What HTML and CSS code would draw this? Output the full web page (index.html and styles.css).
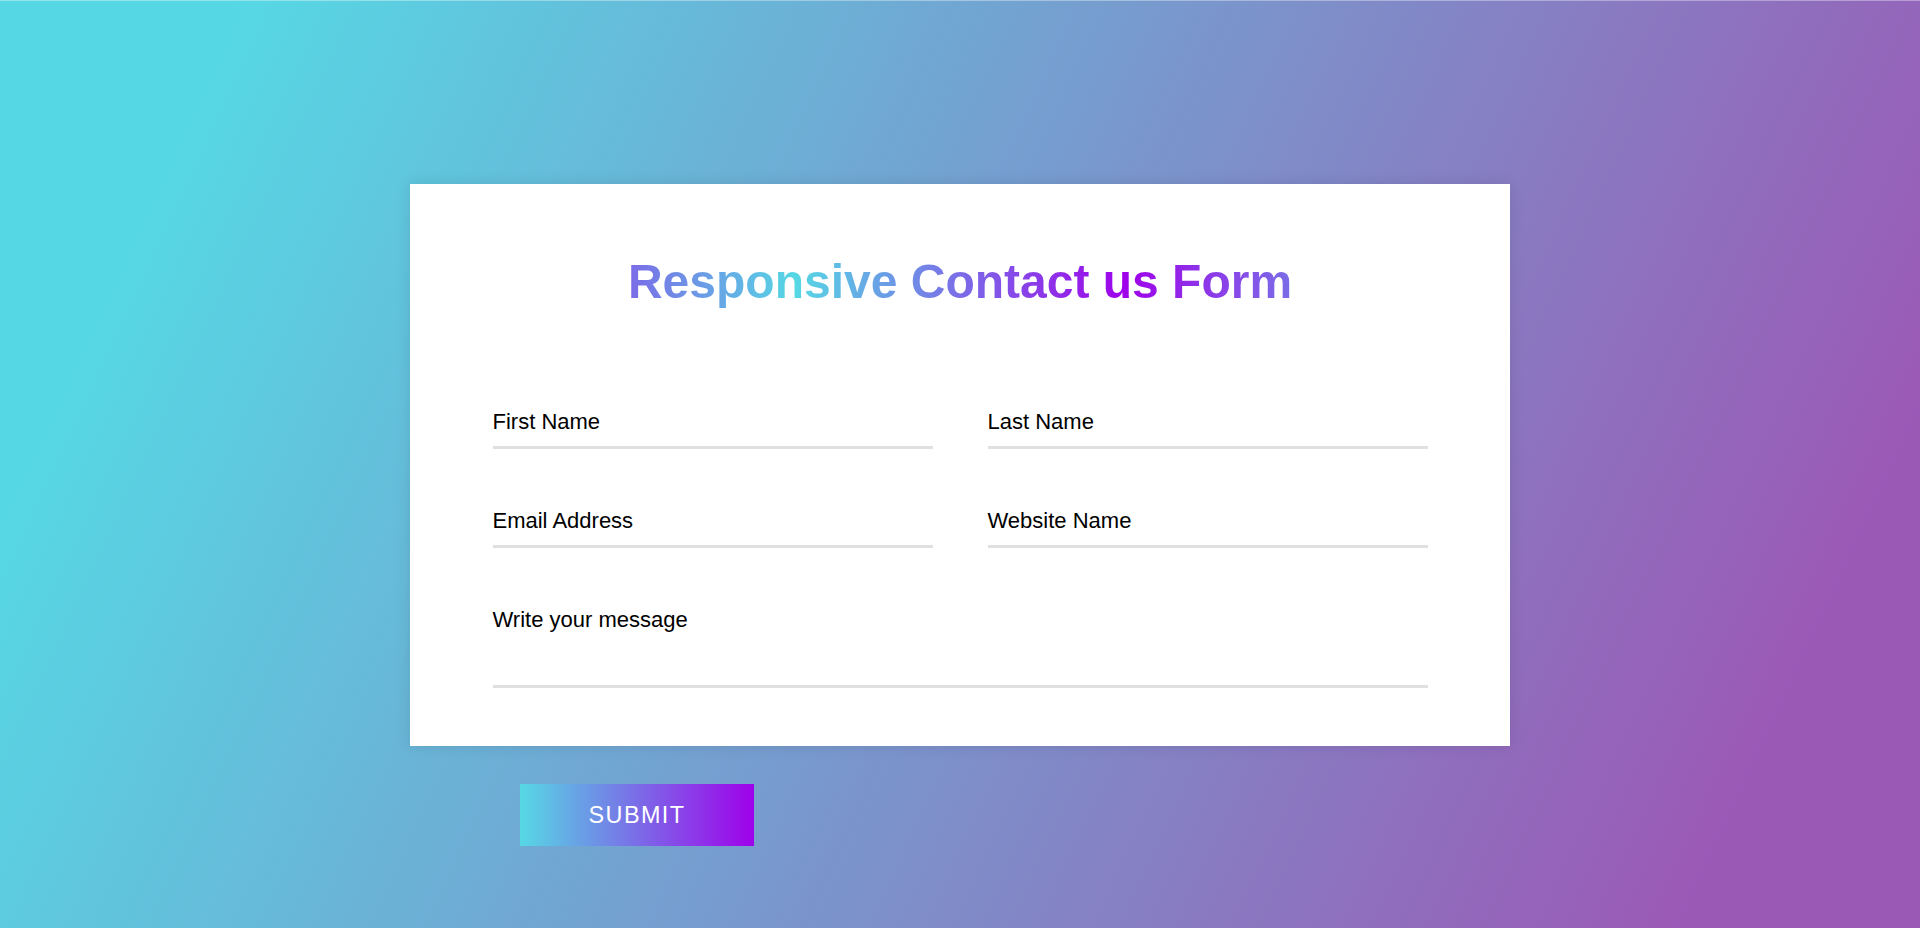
FILE: index.html
```html
<!DOCTYPE html>
<html lang="en">
<head>
<meta charset="utf-8">
<title>Responsive Contact us Form</title>
<link rel="stylesheet" href="styles.css">
</head>
<body>
  <div class="page">
    <div class="container">
      <h1 class="text">Responsive Contact us Form</h1>
      <form class="form" action="#">
        <div class="form-row">
          <div class="input-data">
            <input type="text" required>
            <label>First Name</label>
          </div>
          <div class="input-data">
            <input type="text" required>
            <label>Last Name</label>
          </div>
        </div>
        <div class="form-row">
          <div class="input-data">
            <input type="text" required>
            <label>Email Address</label>
          </div>
          <div class="input-data">
            <input type="text" required>
            <label>Website Name</label>
          </div>
        </div>
        <div class="form-row single">
          <div class="input-data textarea">
            <textarea required></textarea>
            <label>Write your message</label>
          </div>
        </div>
      </form>
    </div>
    <div class="submit-row">
      <button class="submit-btn" type="button">submit</button>
    </div>
  </div>
</body>
</html>
```

FILE: styles.css
```css
html, body {
  margin: 0;
  padding: 0;
}

body {
  min-height: 100vh;
  overflow: hidden;
  background: linear-gradient(115deg, #56d8e4 10%, #9b59b6 90%);
  box-shadow: inset 0 1px 0 rgba(255, 255, 255, 0.35);
  font-family: "Liberation Sans", Arial, sans-serif;
}

.page {
  display: flex;
  flex-direction: column;
  align-items: center;
  padding-top: 184px;
}

.container {
  width: 990px;
  background: #fff;
  padding: 34px 55px 14px 55px;
  box-shadow: 0 0 14px rgba(0, 0, 0, 0.1);
}

.text {
  margin: 36px 0 0 0;
  text-align: center;
  font-size: 48px;
  line-height: 55px;
  font-weight: 700;
  background: linear-gradient(to left, #56d8e4, #9f01ea, #56d8e4, #9f01ea);
  -webkit-background-clip: text;
  background-clip: text;
  -webkit-text-fill-color: transparent;
  color: transparent;
}

.form {
  display: flex;
  flex-direction: column;
  gap: 44px;
  padding: 85px 0 44px 0;
  margin: 0;
}

.form-row {
  display: grid;
  grid-template-columns: 1fr 1fr;
  column-gap: 55px;
  padding: 0 27.5px;
}

.form-row.single {
  grid-template-columns: 1fr;
}

.input-data {
  position: relative;
  height: 55px;
}

.input-data.textarea {
  height: 96px;
}

.input-data input,
.input-data textarea {
  display: block;
  box-sizing: border-box;
  width: 100%;
  height: 100%;
  margin: 0;
  padding: 0;
  border: none;
  border-bottom: 3px solid #e0e0e0;
  outline: none;
  background: transparent;
  font-family: "Liberation Sans", Arial, sans-serif;
  font-size: 23px;
  color: #000;
}

.input-data textarea {
  resize: none;
  padding-top: 14px;
}

.input-data label {
  position: absolute;
  left: 0;
  bottom: 14px;
  font-size: 22px;
  line-height: normal;
  color: #000;
  pointer-events: none;
}

.input-data.textarea label {
  bottom: 55px;
}

.submit-row {
  width: 1100px;
  padding-left: 110px;
  box-sizing: border-box;
  margin-top: 38px;
}

.submit-btn {
  display: block;
  width: 234px;
  height: 62px;
  margin: 0;
  padding: 0;
  border: none;
  background: linear-gradient(to right, #56d8e4, #9f01ea);
  color: #fff;
  font-family: "Liberation Sans", Arial, sans-serif;
  font-size: 23.4px;
  font-weight: 400;
  letter-spacing: 1.4px;
  text-transform: uppercase;
  cursor: pointer;
}
```
